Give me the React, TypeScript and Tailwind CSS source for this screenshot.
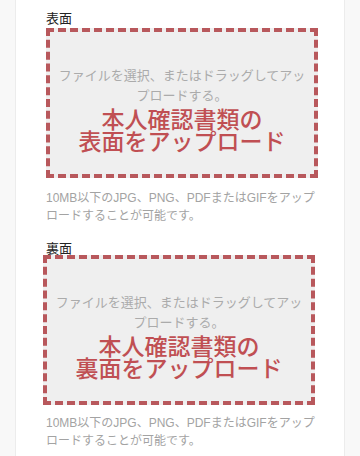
const FONT = "font-['Liberation_Sans','Noto_Sans_CJK_JP',sans-serif]";

function UploadBox({ side, className }: { side: string; className?: string }) {
  return (
    <div
      className={`h-[150px] w-[272px] border-4 border-dashed border-[#b8585c] bg-[#efefef] pt-[34px] text-center ${className ?? ""}`}
    >
      <p className="text-[13px] leading-[20px] text-[#ababab]">
        ファイルを選択、またはドラッグしてアッ
        <br />
        プロードする。
      </p>
      <p className="mt-[3px] text-[23px] font-medium leading-[22px] text-[#c04f53]">
        本人確認書類の
        <br />
        {side}をアップロード
      </p>
    </div>
  );
}

function Caption({ className }: { className?: string }) {
  return (
    <p className={`text-[12px] leading-[18px] text-[#a3a3a3] ${className ?? ""}`}>
      10MB以下のJPG、PNG、PDFまたはGIFをアップ
      <br />
      ロードすることが可能です。
    </p>
  );
}

export default function App() {
  return (
    <div className={`h-[456px] w-[360px] overflow-hidden bg-[#f8f8f8] ${FONT}`}>
      <div className="mx-[15px] h-full border-x border-[#ececec] bg-white pl-[30px] pt-[10px]">
        <div className="text-[13px] leading-[17px] text-[#222]">表面</div>
        <UploadBox side="表面" className="mt-[1px]" />
        <Caption className="mt-[11px]" />

        <div className="mt-[15px] text-[13px] leading-[17px] text-[#222]">裏面</div>
        <UploadBox side="裏面" className="-ml-[3px] -mt-[2px]" />
        <Caption className="mt-[9px]" />
      </div>
    </div>
  );
}
